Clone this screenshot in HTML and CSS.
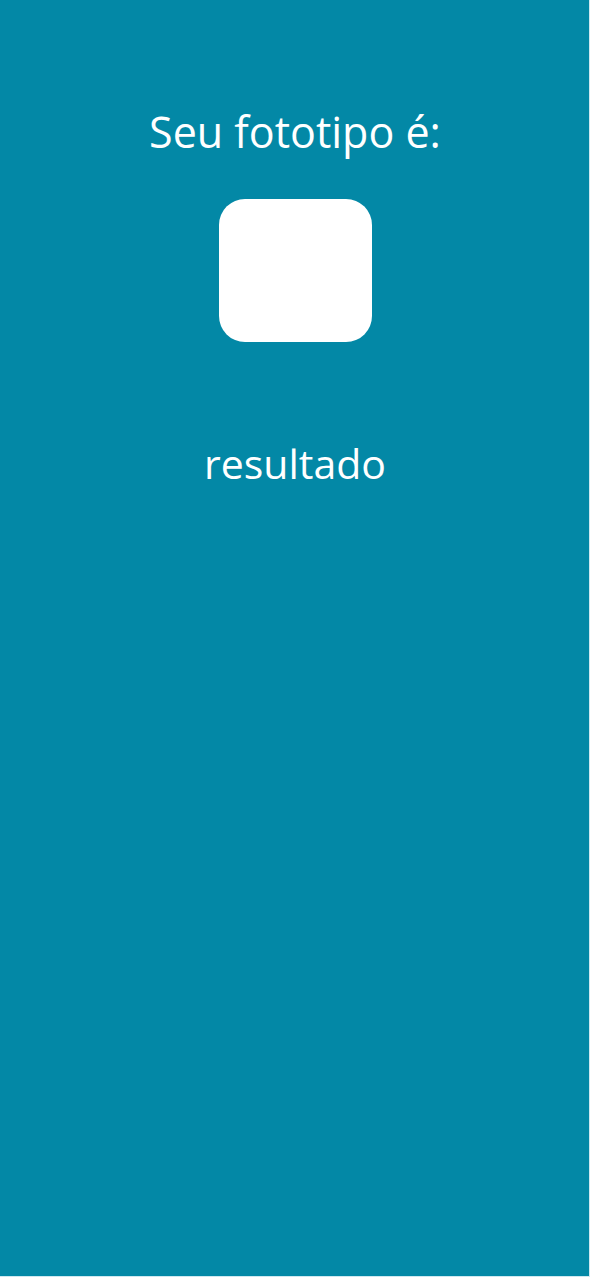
FILE: index.html
```html
<!DOCTYPE html>
<html lang="pt">
<head>
<meta charset="utf-8">
<link rel="stylesheet" href="styles.css">
</head>
<body>
<main class="screen">
  <h1 class="title">Seu fototipo é:</h1>
  <div class="badge"></div>
  <p class="result">resultado</p>
</main>
</body>
</html>
```
FILE: styles.css
```css
html { background: #cfe8f0; }
body { margin: 0; }
.screen {
  box-sizing: border-box;
  width: 590px;
  height: 1277px;
  background: #0388a6;
  box-shadow: inset -1px -1px 0 #cfe8f0;
  display: flex;
  flex-direction: column;
  align-items: center;
  font-family: "Open Sans", "Noto Sans", sans-serif;
  color: #ffffff;
}
.title {
  margin: 104px 0 0;
  font-size: 43px;
  font-weight: 400;
  line-height: 56px;
}
.badge {
  margin-top: 39px;
  width: 153px;
  height: 143px;
  background: #ffffff;
  border-radius: 26px;
}
.result {
  margin: 96px 0 0;
  font-size: 41px;
  line-height: 50px;
}
```
